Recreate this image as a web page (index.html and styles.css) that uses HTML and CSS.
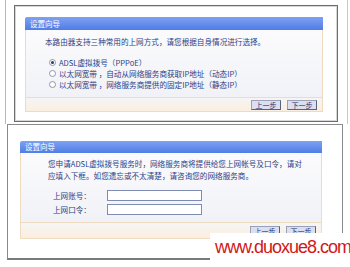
FILE: index.html
```html
<!DOCTYPE html>
<html lang="zh">
<head>
	<meta charset="utf-8" />
	<title>设置向导</title>
	<link rel="stylesheet" href="styles.css">
</head>
<body>

    <div class="frame-outer">
        <div class="shot shot-top">
            <div class="panel">
                <div class="panel-head">设置向导</div>
                <div class="panel-body body-top">
                    <p class="intro">本路由器支持三种常用的上网方式，请您根据自身情况进行选择。</p>
                    <ul class="options">
                        <li><span class="radio on"></span>ADSL虚拟拨号（PPPoE）</li>
                        <li><span class="radio"></span>以太网宽带 ，自动从网络服务商获取IP地址（动态IP）</li>
                        <li><span class="radio"></span>以太网宽带 ，网络服务商提供的固定IP地址（静态IP）</li>
                    </ul>
                </div>
                <div class="panel-foot">
                    <button class="btn">上一步</button>
                    <button class="btn">下一步</button>
                </div>
            </div>
        </div>
    </div>

    <div class="shot shot-bottom">
        <div class="panel panel-wide">
            <div class="panel-head">设置向导</div>
            <div class="panel-body body-bottom">
                <p class="note">您申请ADSL虚拟拨号服务时，网络服务商将提供给您上网帐号及口令，请对<br>应填入下框。如您遗忘或不太清楚，请咨询您的网络服务商。</p>
                <div class="row"><label>上网账号：</label><input type="text"></div>
                <div class="row"><label>上网口令：</label><input type="password"></div>
            </div>
            <div class="panel-foot foot-tall">
                <button class="btn">上一步</button>
                <button class="btn">下一步</button>
            </div>
        </div>
    </div>

    <div class="watermark">www.duoxue8.com</div>

</body>
</html>
```

FILE: styles.css
```css
body{
    margin: 0;
    width: 350px;
    height: 267px;
    overflow: hidden;
    position: relative;
    background: #fff;
    font-family: "Noto Sans CJK SC", sans-serif;
    color: #2b3e86;
}

.frame-outer{
    margin-left: 5px;
    width: 333px;
    height: 119px;
    padding: 5px 0 0 8px;
    border-left: 1px solid #b8b8b8;
    border-right: 1px solid #c8c8c8;
}

.shot{
    box-sizing: border-box;
    background: #fff;
}

.shot-top{
    width: 324px;
    height: 117px;
    padding: 11px 0 0 10px;
    border: 1px solid #6c6c6c;
    box-shadow: inset 0 0 0 1px #d8d8d8;
}

.shot-bottom{
    margin-left: 7px;
    width: 336px;
    height: 136px;
    padding: 16px 0 0 12px;
    border: 1px solid #8a8a8a;
    border-bottom: 2px solid #7a7a7a;
}

.panel{
    width: 298px;
}

.panel-wide{
    width: 302px;
}

.panel-head{
    height: 13px;
    line-height: 13px;
    padding-left: 5px;
    font-size: 7.5px;
    color: #fff;
    background: linear-gradient(#7ea2f2, #4f7ce6);
    border-radius: 2px 0 0 0;
}

.shot-bottom .panel-head{
    height: 12px;
    line-height: 12px;
}

.panel-body{
    box-sizing: border-box;
    border-left: 1px solid #efdcc0;
    border-right: 1px solid #efdcc0;
    background: linear-gradient(#fbfbfd, #f1f2f7);
    font-size: 7.6px;
}

.body-top{
    height: 67px;
    padding: 7px 0 0 19px;
}

.body-bottom{
    height: 69px;
    padding: 5px 0 0 27px;
}

.intro{
    margin: 0;
    line-height: 10px;
}

.options{
    list-style: none;
    margin: 10px 0 0 4px;
    padding: 0;
}

.options li{
    display: flex;
    align-items: center;
    height: 11px;
}

.radio{
    width: 5px;
    height: 5px;
    margin-right: 3px;
    border: 1px solid #8f96a8;
    border-radius: 50%;
    background: #fff;
    position: relative;
}

.radio.on::after{
    content: "";
    position: absolute;
    left: 1px;
    top: 1px;
    width: 3px;
    height: 3px;
    border-radius: 50%;
    background: #2a3a5c;
}

.note{
    margin: 0;
    line-height: 12px;
}

.row{
    display: flex;
    align-items: center;
    height: 10px;
    margin-left: 5px;
}

.row:first-of-type{
    margin-top: 8px;
}

.row + .row{
    margin-top: 4px;
}

.row label{
    width: 54px;
}

.row input{
    box-sizing: border-box;
    width: 95px;
    height: 11px;
    margin: 0;
    padding: 0;
    border: 1px solid #7f8bb0;
    background: #fff;
}

.panel-foot{
    box-sizing: border-box;
    height: 15px;
    display: flex;
    justify-content: flex-end;
    align-items: flex-start;
    gap: 6px;
    padding: 2px 5px 0 0;
    border: 1px solid #efdcc0;
    background: linear-gradient(#f6f5f4, #fbeee0);
}

.foot-tall{
    height: 17px;
    padding-top: 3px;
}

.btn{
    box-sizing: border-box;
    width: 30px;
    height: 10px;
    margin: 0;
    padding: 0;
    font-family: "Noto Sans CJK SC", sans-serif;
    font-size: 7px;
    line-height: 8px;
    color: #22306a;
    background: #dcdff0;
    border: 1px solid #5a6078;
    border-top-color: #9aa0b8;
    border-left-color: #9aa0b8;
}

.watermark{
    position: absolute;
    left: 210px;
    top: 233px;
    width: 140px;
    height: 30px;
    padding-left: 5px;
    box-sizing: border-box;
    background: #fff;
    font-family: "Liberation Sans", Arial, sans-serif;
    font-size: 18px;
    letter-spacing: -1px;
    line-height: 28px;
    color: #d01818;
}
```
